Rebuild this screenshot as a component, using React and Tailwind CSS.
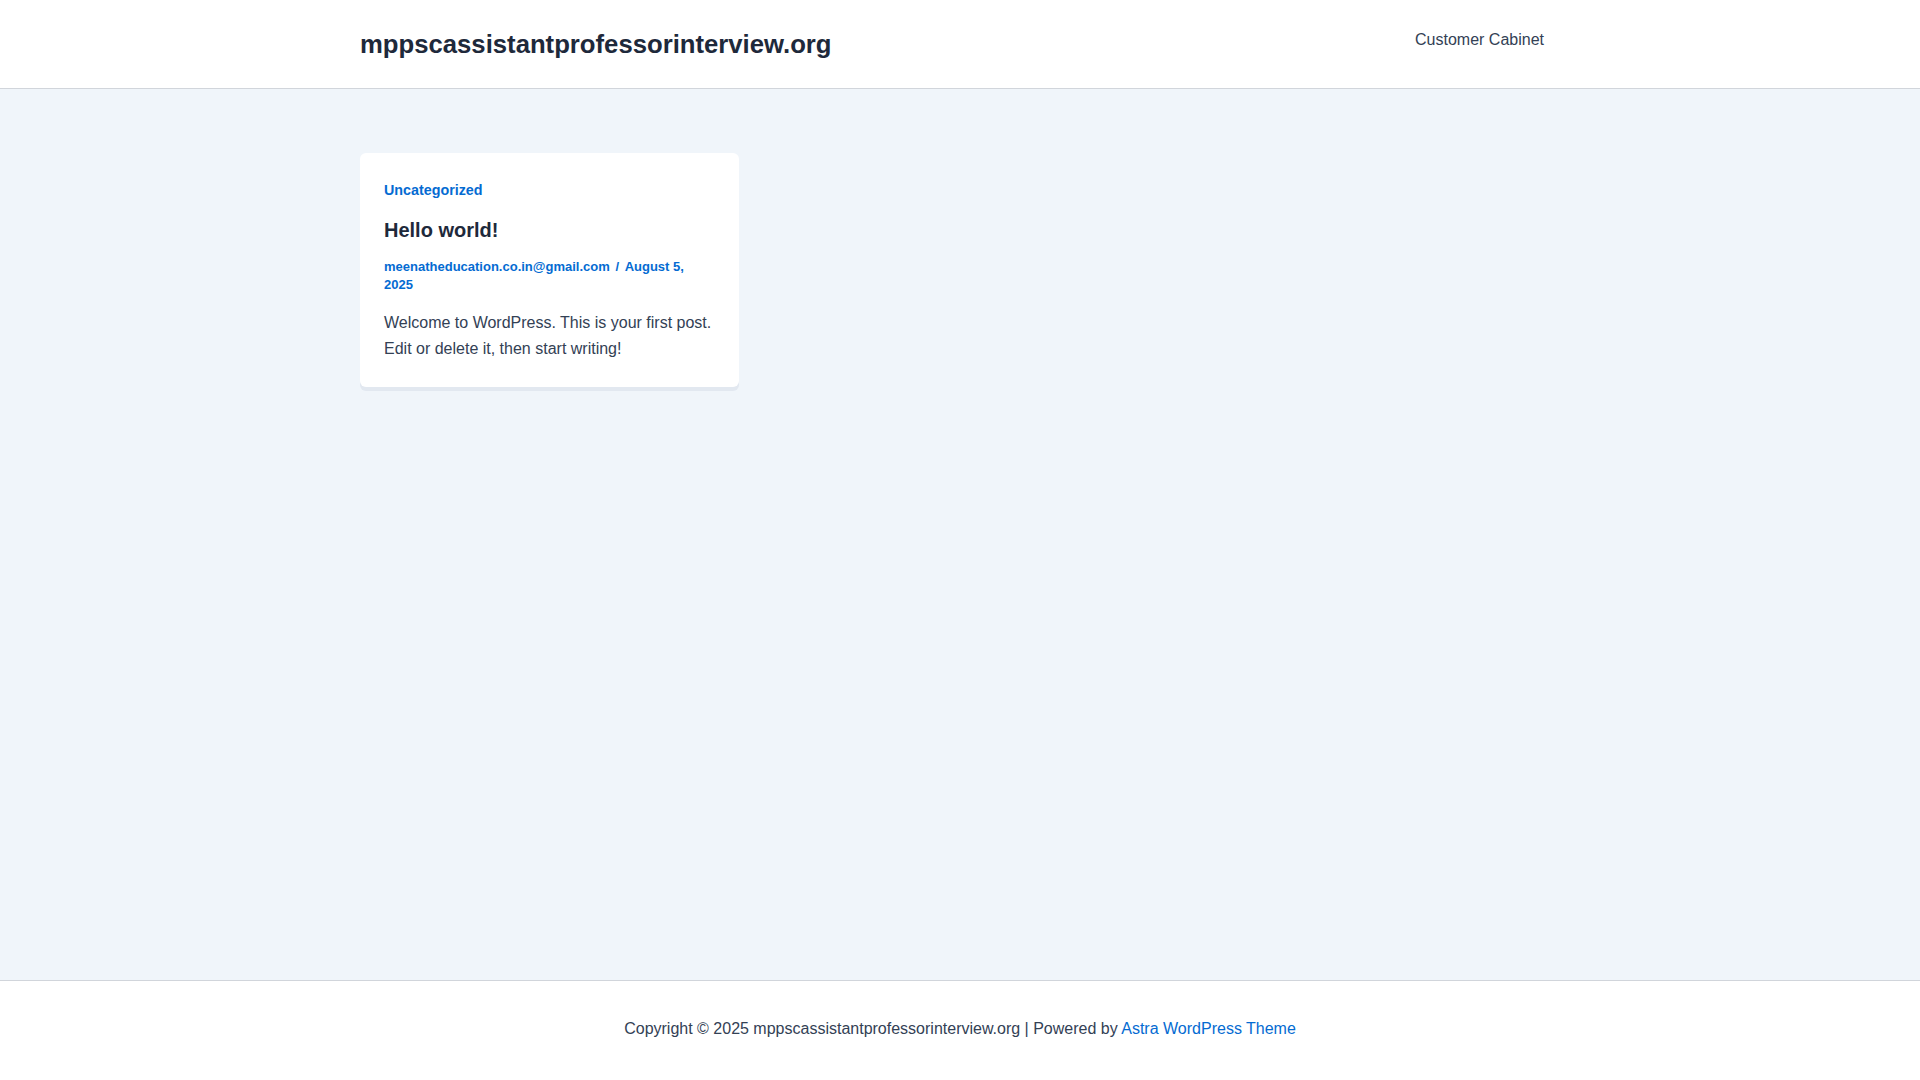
import React from "react";

const posts = [
  {
    category: "Uncategorized",
    title: "Hello world!",
    author: "meenatheducation.co.in@gmail.com",
    date: "August 5, 2025",
    excerpt:
      "Welcome to WordPress. This is your first post. Edit or delete it, then start writing!",
  },
];

const PostCard = ({ post }) => (
  <article className="w-[379px] bg-white rounded-md px-6 pt-6 pb-[25px] shadow-[0_4px_0_0_#e2e8f0]">
    <a href="#" className="block text-[14.3px] leading-[26px] font-bold text-[#046bd2]">
      {post.category}
    </a>
    <h2 className="mt-[13px] text-[20px] leading-[28px] font-bold text-[#1e293b]">
      {post.title}
    </h2>
    <div className="mt-[14px] pr-[6px] text-[13px] leading-[18px] font-bold text-[#046bd2]">
      <a href="#">{post.author}</a>
      <span className="px-[2px]"> / </span>
      <span>{post.date}</span>
    </div>
    <p className="mt-[16px] text-[16px] leading-[26px] text-[#334155]">{post.excerpt}</p>
  </article>
);

export default function App() {
  return (
    <div
      className="min-h-screen flex flex-col bg-[#f0f5fa]"
      style={{ fontFamily: "'Liberation Sans', Arial, sans-serif" }}
    >
      {/* Header */}
      <header className="h-[89px] bg-white border-b border-[#d1d5db]">
        <div className="w-[1200px] mx-auto h-full flex items-center justify-between">
          <a href="#" className="pt-[2px] text-[25.7px] font-bold text-[#1e293b] leading-none">
            mppscassistantprofessorinterview.org
          </a>
          <nav className="h-full flex items-center pb-[8px]">
            <a href="#" className="px-4 text-[16px] text-[#334155]">
              Customer Cabinet
            </a>
          </nav>
        </div>
      </header>

      {/* Main */}
      <main className="flex-1 pt-16">
        <div className="w-[1200px] mx-auto grid grid-cols-3 gap-6">
          {posts.map((post) => (
            <PostCard key={post.title} post={post} />
          ))}
        </div>
      </main>

      {/* Footer */}
      <footer className="h-[100px] bg-white border-t border-[#d1d5db] pt-[36px]">
        <p className="text-center text-[16px] leading-[24px] text-[#334155]">
          Copyright © 2025 mppscassistantprofessorinterview.org | Powered by{" "}
          <a href="#" className="text-[#046bd2]">
            Astra WordPress Theme
          </a>
        </p>
      </footer>
    </div>
  );
}
